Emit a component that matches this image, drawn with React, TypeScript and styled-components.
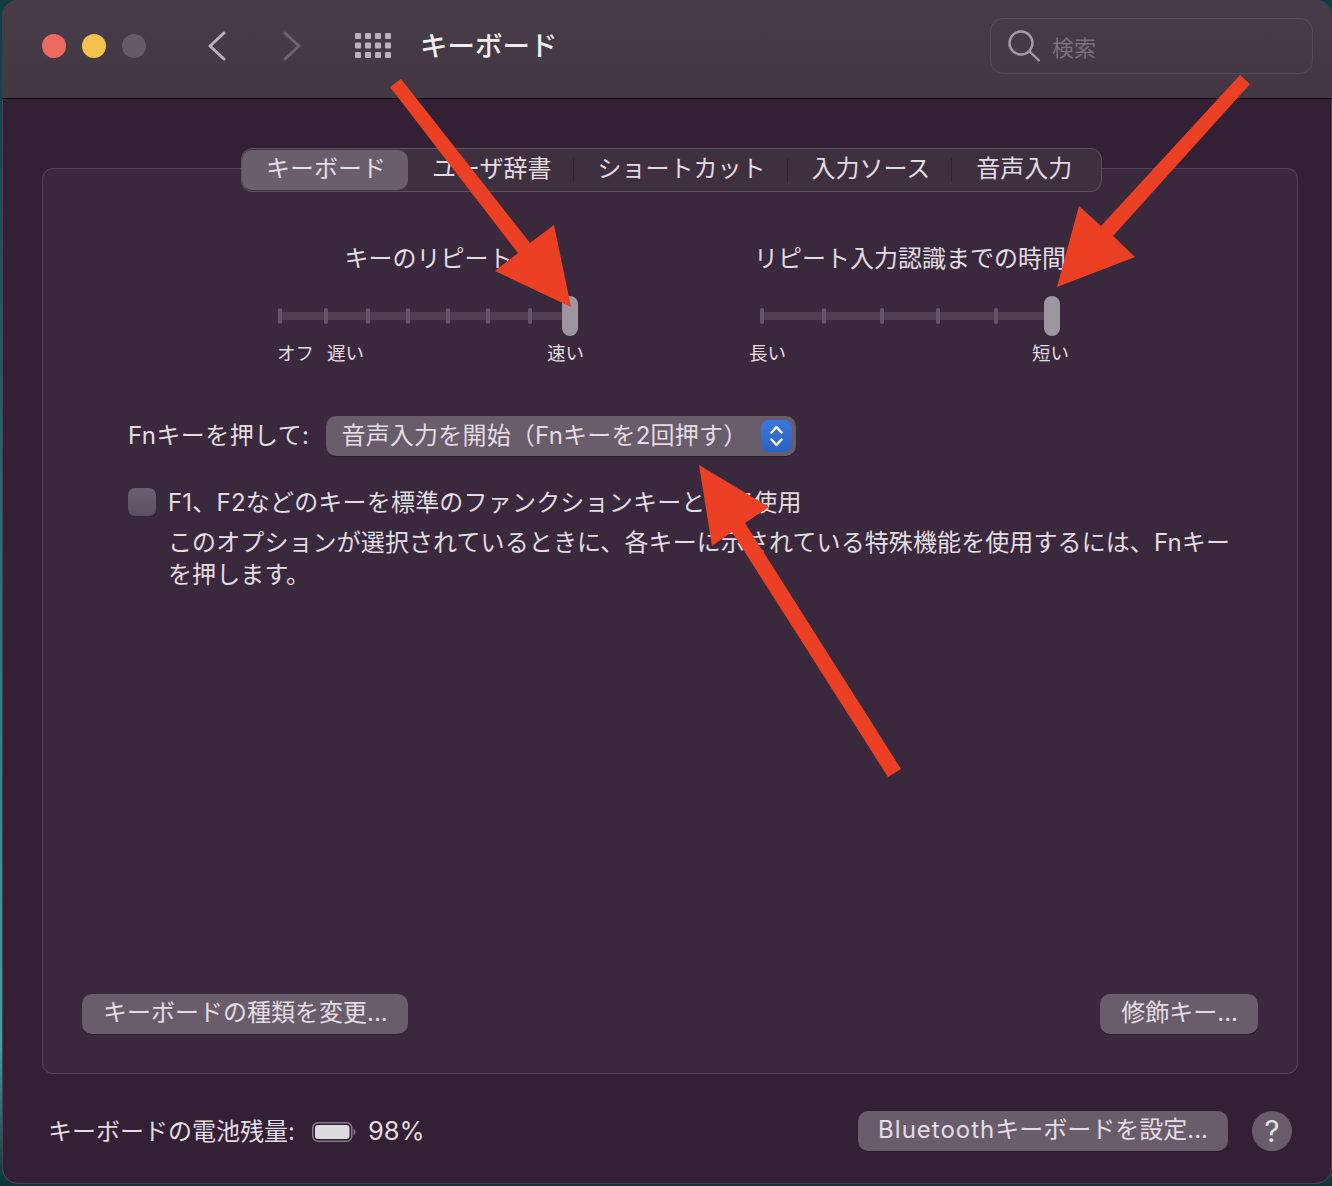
import React from "react"
import styled, { createGlobalStyle } from "styled-components"

const GlobalStyle = createGlobalStyle`
    html, body {
        margin: 0;
        padding: 0;
    }
    body {
        width: 1332px;
        height: 1186px;
        overflow: hidden;
        background: linear-gradient(180deg, #0f3d42 0%, #1f7f80 55%, #3aa6a6 88%, #0d3437 100%);
        font-family: "Inter", "Noto Sans CJK JP", sans-serif;
        color: #e2dde3;
    }
`

const Page = styled.div`
    position: relative;
    width: 1332px;
    height: 1186px;
`

const Window = styled.div`
    display: flex;
    flex-direction: column;
    box-sizing: border-box;
    width: 1330px;
    height: 1184px;
    margin-left: 2px;
    background: #332035;
    border-radius: 16px;
    overflow: hidden;
    box-shadow: inset 0 0 0 1px rgba(255, 255, 255, 0.14);
`

const TitleBar = styled.div`
    display: flex;
    align-items: center;
    flex: none;
    box-sizing: border-box;
    height: 99px;
    padding: 0 19px 7px 40px;
    background: linear-gradient(180deg, #483c48, #433743);
    border-bottom: 1px solid #0c060c;
`

const Light = styled.span<{ $color: string }>`
    width: 24px;
    height: 24px;
    margin-right: 16px;
    border-radius: 50%;
    background: ${(p) => p.$color};
`

const NavIcon = styled.svg<{ $offset?: number }>`
    flex: none;
    display: block;
    margin-left: ${(p) => p.$offset ?? 0}px;
    fill: none;
    stroke-linecap: round;
    stroke-linejoin: round;
`

const WindowTitle = styled.div`
    margin-left: 29px;
    font-size: 27.5px;
    font-weight: 500;
    line-height: 36px;
    color: #f1eef1;
`

const SearchBox = styled.div`
    display: flex;
    align-items: center;
    box-sizing: border-box;
    width: 323px;
    height: 56px;
    margin-left: auto;
    margin-top: 1px;
    padding-left: 17px;
    border: 1.5px solid rgba(255, 255, 255, 0.09);
    border-radius: 13px;
    font-size: 22px;
    color: #7b6f7d;
`

const SearchText = styled.span`
    margin-left: 12px;
`

const Content = styled.div`
    display: flex;
    flex-direction: column;
    flex: 1;
    padding: 69px 34px 0 40px;
`

const Panel = styled.div`
    display: flex;
    flex-direction: column;
    box-sizing: border-box;
    height: 906px;
    padding: 0 39px 39px 39px;
    background: #3a293c;
    border: 1.5px solid rgba(255, 255, 255, 0.12);
    border-radius: 11px;
`

const TabBar = styled.div`
    display: flex;
    align-items: center;
    align-self: flex-start;
    box-sizing: border-box;
    height: 44px;
    margin: -21px 0 0 159px;
    padding: 1px 7px 1px 0;
    background: #3f3040;
    border: 1px solid rgba(255, 255, 255, 0.16);
    border-radius: 12px;
`

const Tab = styled.div<{ $active?: boolean; $divider?: boolean }>`
    position: relative;
    box-sizing: border-box;
    height: 40px;
    padding: 0 22px 0 24px;
    font-size: 24px;
    line-height: 38px;
    white-space: nowrap;
    border-radius: 10px;
    background: ${(p) => (p.$active ? "#6a5e6c" : "transparent")};
    &::after {
        content: "";
        display: ${(p) => (p.$divider ? "block" : "none")};
        position: absolute;
        right: 0;
        top: 8px;
        width: 1px;
        height: 24px;
        background: #332434;
    }
`

const SliderRow = styled.div`
    display: flex;
    margin: 51px 0 0 196px;
`

const SliderGroup = styled.div<{ $width: number; $gap: number }>`
    display: flex;
    flex-direction: column;
    flex: none;
    width: ${(p) => p.$width}px;
    margin-right: ${(p) => p.$gap}px;
`

const SliderTitle = styled.div<{ $align: string; $inset: number }>`
    margin-right: ${(p) => p.$inset}px;
    font-size: 24px;
    line-height: 32px;
    white-space: nowrap;
    text-align: ${(p) => p.$align};
`

const Track = styled.div<{ $left: number; $right: number }>`
    position: relative;
    height: 40px;
    margin: 21px ${(p) => p.$right}px 0 ${(p) => p.$left}px;
    &::before {
        content: "";
        position: absolute;
        left: 0;
        right: 0;
        top: 16px;
        height: 8px;
        background: #4f3f51;
    }
`

const Tick = styled.span<{ $x: number }>`
    position: absolute;
    left: ${(p) => p.$x - 2}px;
    top: 12px;
    width: 4px;
    height: 16px;
    border-radius: 2px;
    background: #64566a;
`

const Thumb = styled.span`
    position: absolute;
    right: 0;
    top: 0;
    width: 16px;
    height: 40px;
    border-radius: 8px;
    background: #9d95a0;
`

const TickLabels = styled.div`
    display: flex;
    margin: 5px -1px 0 -1px;
    font-size: 18.5px;
    line-height: 24px;
`

const TickLabel = styled.span<{ $end?: boolean }>`
    margin-left: ${(p) => (p.$end ? "auto" : "0")};
    margin-right: ${(p) => (p.$end ? "0" : "13px")};
`

const FnRow = styled.div`
    display: flex;
    align-items: center;
    margin: 51px 0 0 46px;
    font-size: 24px;
    line-height: 32px;
`

const FnLabel = styled.span`
    letter-spacing: 0.4px;
`

const SelectBox = styled.div`
    display: flex;
    align-items: center;
    box-sizing: border-box;
    width: 470px;
    height: 40px;
    margin-left: 17px;
    padding: 0 4px 0 15px;
    border-radius: 10px;
    background: #695c6b;
    box-shadow: 0 1px 1px rgba(0, 0, 0, 0.3);
    white-space: nowrap;
    letter-spacing: 0.2px;
`

const Stepper = styled.span`
    display: flex;
    align-items: center;
    justify-content: center;
    flex: none;
    width: 31px;
    height: 32px;
    margin-left: auto;
    border-radius: 8px;
    background: linear-gradient(180deg, #3a78df, #2b62c2);
`

const CheckRow = styled.div`
    display: flex;
    margin: 30px 0 0 46px;
    font-size: 24px;
    line-height: 32px;
`

const CheckBox = styled.span`
    flex: none;
    width: 28px;
    height: 28px;
    margin: 2px 12px 0 0;
    border-radius: 7px;
    background: linear-gradient(180deg, #6c5f6f, #5c4f5f);
`

const CheckText = styled.div`
    width: 1070px;
    margin-top: 1px;
`

const CheckTitle = styled.div`
    letter-spacing: 0.2px;
`

const CheckHint = styled.div`
    margin-top: 8px;
    letter-spacing: 0.1px;
`

const ButtonRow = styled.div`
    display: flex;
    justify-content: space-between;
    margin-top: auto;
`

const PushButton = styled.div`
    box-sizing: border-box;
    height: 40px;
    padding: 0 20px 0 21px;
    border-radius: 10px;
    background: #6a5d6b;
    box-shadow: 0 1px 1px rgba(0, 0, 0, 0.25);
    font-size: 24px;
    line-height: 37px;
    white-space: nowrap;
`

const Footer = styled.div`
    display: flex;
    align-items: center;
    margin-top: 37px;
    margin-left: 6px;
    font-size: 24px;
`

const FooterLabel = styled.span`
    padding-bottom: 3px;
`

const BatteryIcon = styled.svg`
    display: block;
    flex: none;
    margin: 2px 12px 0 17px;
`

const Percent = styled.span`
    padding-bottom: 1px;
    font-size: 25.5px;
`

const FooterButton = styled(PushButton)`
    margin-left: auto;
    padding: 0 20px;
`

const BrandName = styled.span`
    letter-spacing: 1px;
`

const HelpButton = styled.div`
    width: 40px;
    height: 40px;
    margin: 0 6px 0 24px;
    border-radius: 50%;
    background: #6a5d6b;
    font-size: 30px;
    line-height: 40px;
    text-align: center;
`

const Arrows = styled.svg`
    position: absolute;
    left: 0;
    top: 0;
    pointer-events: none;
`

const sliders = [
    {
        title: "キーのリピート",
        align: "center",
        inset: 4,
        width: 305,
        gap: 167,
        left: 2,
        right: 5,
        ticks: [0, 46, 88, 128, 168, 208, 250],
        labels: ["オフ", "遅い"],
        end: "速い",
    },
    {
        title: "リピート入力認識までの時間",
        align: "right",
        inset: 2,
        width: 318,
        gap: 0,
        left: 12,
        right: 8,
        ticks: [0, 62, 120, 176, 234],
        labels: ["長い"],
        end: "短い",
    },
]

const tabs = ["キーボード", "ユーザ辞書", "ショートカット", "入力ソース", "音声入力"]

const dots: [number, number][] = []
for (let row = 0; row < 3; row++) {
    for (let col = 0; col < 4; col++) {
        dots.push([col * 10, row * 9.5])
    }
}

export default function App() {
    return (
        <Page>
            <GlobalStyle />
            <Window>
                <TitleBar>
                    <Light $color="#ee6a5f" />
                    <Light $color="#f6c04f" />
                    <Light $color="#665a67" />
                    <NavIcon $offset={45} width="20" height="30" viewBox="0 0 20 30" stroke="#b9b1bb" strokeWidth="3">
                        <path d="M17 2 3 15l14 13" />
                    </NavIcon>
                    <NavIcon $offset={55} width="20" height="30" viewBox="0 0 20 30" stroke="#6f6371" strokeWidth="3">
                        <path d="M3 2l14 13L3 28" />
                    </NavIcon>
                    <NavIcon $offset={53} width="36" height="25" viewBox="0 0 36 25" stroke="none">
                        {dots.map(([x, y]) => (
                            <rect key={`${x}-${y}`} x={x} y={y} width="6" height="6" rx="1" fill="#bdb1be" />
                        ))}
                    </NavIcon>
                    <WindowTitle>キーボード</WindowTitle>
                    <SearchBox>
                        <NavIcon width="32" height="32" viewBox="0 0 32 32" stroke="#a49ca6" strokeWidth="2.4">
                            <circle cx="13" cy="13" r="11.5" />
                            <path d="M21.5 21.5 31 30.5" />
                        </NavIcon>
                        <SearchText>検索</SearchText>
                    </SearchBox>
                </TitleBar>
                <Content>
                    <Panel>
                        <TabBar>
                            {tabs.map((t, i) => (
                                <Tab key={t} $active={i === 0} $divider={i > 0 && i < tabs.length - 1}>
                                    {t}
                                </Tab>
                            ))}
                        </TabBar>
                        <SliderRow>
                            {sliders.map((s) => (
                                <SliderGroup key={s.title} $width={s.width} $gap={s.gap}>
                                    <SliderTitle $align={s.align} $inset={s.inset}>
                                        {s.title}
                                    </SliderTitle>
                                    <Track $left={s.left} $right={s.right}>
                                        {s.ticks.map((x) => (
                                            <Tick key={x} $x={x} />
                                        ))}
                                        <Thumb />
                                    </Track>
                                    <TickLabels>
                                        {s.labels.map((l) => (
                                            <TickLabel key={l}>{l}</TickLabel>
                                        ))}
                                        <TickLabel $end>{s.end}</TickLabel>
                                    </TickLabels>
                                </SliderGroup>
                            ))}
                        </SliderRow>
                        <FnRow>
                            <FnLabel>Fnキーを押して:</FnLabel>
                            <SelectBox>
                                音声入力を開始（Fnキーを2回押す）
                                <Stepper>
                                    <svg width="15" height="24" viewBox="0 0 15 24" fill="none" stroke="#fff" strokeWidth="2.4" strokeLinecap="round" strokeLinejoin="round">
                                        <path d="M2.5 8.5 7.5 3l5 5.5M2.5 15.5l5 5.5 5-5.5" />
                                    </svg>
                                </Stepper>
                            </SelectBox>
                        </FnRow>
                        <CheckRow>
                            <CheckBox />
                            <CheckText>
                                <CheckTitle>F1、F2などのキーを標準のファンクションキーとして使用</CheckTitle>
                                <CheckHint>
                                    このオプションが選択されているときに、各キーに示されている特殊機能を使用するには、Fnキーを押します。
                                </CheckHint>
                            </CheckText>
                        </CheckRow>
                        <ButtonRow>
                            <PushButton>キーボードの種類を変更...</PushButton>
                            <PushButton>修飾キー...</PushButton>
                        </ButtonRow>
                    </Panel>
                    <Footer>
                        <FooterLabel>キーボードの電池残量:</FooterLabel>
                        <BatteryIcon width="44" height="20" viewBox="0 0 44 20">
                            <rect x="0.75" y="0.75" width="39" height="18.5" rx="5" fill="none" stroke="#857a87" strokeWidth="1.5" />
                            <rect x="3" y="3" width="34.5" height="14" rx="3" fill="#dcdadc" />
                            <path d="M41.5 7c1.5.6 2 1.6 2 3s-.5 2.4-2 3z" fill="#857a87" />
                        </BatteryIcon>
                        <Percent>98%</Percent>
                        <FooterButton>
                            <BrandName>Bluetooth</BrandName>キーボードを設定...
                        </FooterButton>
                        <HelpButton>?</HelpButton>
                    </Footer>
                </Content>
            </Window>
            <Arrows width="1332" height="1186" viewBox="0 0 1332 1186">
                <polygon fill="#ec4024" points="390,87 401,79 530,243 554,225 571,307 495,271 518,253" />
                <polygon fill="#ec4024" points="1240,75 1250,84 1113,236 1135,257 1057,287 1079,206 1101,226" />
                <polygon fill="#ec4024" points="901,769 888,777 732,532 712,546 699,465 769,507 745,523" />
            </Arrows>
        </Page>
    )
}
